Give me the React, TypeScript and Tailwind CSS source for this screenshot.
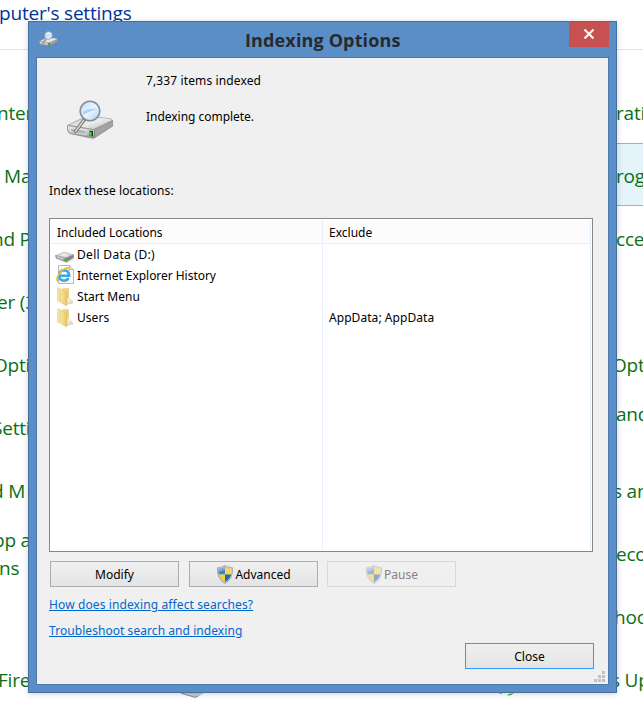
import type { ReactNode } from 'react';
import clsx from 'clsx';

function DriveSearchIcon({ className }: { className?: string }) {
  return (
    <svg viewBox="0 0 48 40" className={className}>
      <defs>
        <linearGradient id="driveTop" x1="0" y1="0" x2="1" y2="1">
          <stop offset="0" stopColor="#b9b9b9" />
          <stop offset="0.5" stopColor="#ededed" />
          <stop offset="1" stopColor="#b0b0b0" />
        </linearGradient>
        <linearGradient id="driveFront" x1="0" y1="0" x2="0" y2="1">
          <stop offset="0" stopColor="#f1f1f1" />
          <stop offset="1" stopColor="#9c9c9c" />
        </linearGradient>
        <linearGradient id="lens" x1="0" y1="0" x2="1" y2="1">
          <stop offset="0" stopColor="#b8dcfb" />
          <stop offset="0.5" stopColor="#eaf5ff" />
          <stop offset="1" stopColor="#a9d2fa" />
        </linearGradient>
      </defs>
      <path d="M4 34L27 39.5L48 26L44 23Z" fill="#000" opacity="0.12" />
      <path d="M2 25L20 16.5Q22 15.8 24 16L44 18.6Q46.500 19.200 46.500 21L28 30Z" fill="url(#driveTop)" stroke="#959595" strokeWidth="0.6" />
      <path d="M28 29.500L46.500 20.500V26L28 38Z" fill="#a3a3a3" stroke="#7c7c7c" strokeWidth="0.6" />
      <path d="M1.500 25.500L27.500 29.500Q28.500 30 28.500 31V37Q28.500 38.300 27 38L4 33.500Q1.500 32.500 1.500 29Z" fill="url(#driveFront)" stroke="#7b7b7b" strokeWidth="0.7" />
      <path d="M4 28L20 30.500V34.500L5 32Z" fill="#b3b3b3" stroke="#eee" strokeWidth="0.7" />
      <path d="M23.500 30.500L27 31V36.500L23.500 36Z" fill="#163d12" />
      <path d="M23.500 31.500L25.500 32V36L23.500 35.600Z" fill="#4be03b" />
      <path d="M18 20L9.500 31.500" stroke="#666" strokeWidth="3.400" strokeLinecap="round" />
      <path d="M17.500 20.500L9.500 31.500" stroke="#d4d4d4" strokeWidth="1.800" strokeLinecap="round" />
      <circle cx="24" cy="11" r="9.800" fill="url(#lens)" stroke="#8a8d90" strokeWidth="1.600" />
      <path d="M17 12Q23 8 31 9Q24 11 17.500 15Z" fill="#86bef3" opacity="0.6" />
    </svg>
  );
}

function DriveIcon() {
  return (
    <svg viewBox="0 0 20 14" className="mt-1 -ml-px h-3.5 w-5">
      <path d="M1 8L12 13.500L20 8.500L18 6Z" fill="#000" opacity="0.12" />
      <path d="M0.500 5.500L8 2.500Q9 2 10 2.200L18.500 4.800L11 8.200Z" fill="#cfcfcf" stroke="#b4b4b4" strokeWidth="0.500" />
      <path d="M4 5.200L9 3.200L14 4.800L10 6.700Z" fill="#ebebeb" />
      <path d="M0.500 5.500L11 8.200V12L1 8.200Z" fill="#a9a9a9" stroke="#8c8c8c" strokeWidth="0.500" />
      <path d="M11 8.200L18.500 4.800V7.500L11 12Z" fill="#868686" stroke="#7c7c7c" strokeWidth="0.500" />
      <path d="M2 6.800L8 8.800" stroke="#eee" strokeWidth="0.800" />
      <path d="M9 8.600L10.500 9V11.300L9 10.800Z" fill="#2fbd32" />
    </svg>
  );
}

function ExplorerIcon() {
  return (
    <svg viewBox="0 0 18 20" className="-mt-px h-5 w-[18px]">
      <path d="M2.500 0.500H13.500L17.500 4.500V18.500H2.500Z" fill="#fafafa" stroke="#a8a8a8" strokeWidth="0.800" />
      <path d="M13.500 0.500V4.500H17.500" fill="#e2e2e2" stroke="#a8a8a8" strokeWidth="0.700" />
      <path d="M12.600 13Q11 15.700 8 15.700Q3 15 3 10.500Q3.500 5.500 8 5.300Q13 5.500 13.200 10.800H4" fill="none" stroke="#38a7e6" strokeWidth="2.500" />
      <path d="M2 16.500C-1.500 14 5 4.500 10.500 3C13 2.300 14 3.500 12.800 5.500" fill="none" stroke="#f2bb2a" strokeWidth="1.700" />
    </svg>
  );
}

function FolderIcon() {
  return (
    <svg viewBox="0 0 18 20" className="h-5 w-[18px]">
      <defs>
        <linearGradient id="folderFront" x1="0" y1="0" x2="1" y2="0">
          <stop offset="0" stopColor="#f8e8a6" />
          <stop offset="1" stopColor="#e6c363" />
        </linearGradient>
      </defs>
      <path d="M7 18.500L17 16.500Q18 14 14 12Z" fill="#000" opacity="0.15" />
      <path d="M6 1.500L13 1V15.500L6 17Z" fill="#ebd287" />
      <path d="M11 11L14.500 10V14.500L11 16Z" fill="#f8edbf" />
      <path d="M1 1.200Q1 0.500 2 0.600L5 1V15.500L1 14.500Z" fill="#f3e0a0" />
      <path d="M4.500 2.500L10 4.500Q11 5 11 6V18Q11 18.800 10.300 18.500L4.500 15.500Z" fill="url(#folderFront)" stroke="#dcbb66" strokeWidth="0.400" />
    </svg>
  );
}

function ShieldIcon({ className }: { className?: string }) {
  return (
    <svg viewBox="0 0 16 19" className={clsx('-mr-px ml-px h-[19px] w-4', className)}>
      <path d="M8 0.400Q11.500 2.500 15.600 2.800Q16.500 13.500 8 18.700Q-0.500 13.500 0.400 2.800Q4.500 2.500 8 0.400Z" fill="#c2c8ca" stroke="#8d9497" strokeWidth="0.600" />
      <path d="M8 2V9.500H1.800Q1.400 7 1.600 4.100Q5 3.800 8 2Z" fill="#3f84c8" />
      <path d="M8 2Q11 3.800 14.400 4.100Q14.600 7 14.200 9.500H8Z" fill="#fbd94b" />
      <path d="M1.800 9.500H8V17.200Q3.200 14.200 1.800 9.500Z" fill="#f6ce3c" />
      <path d="M14.200 9.500H8V17.200Q12.800 14.200 14.200 9.500Z" fill="#2867b1" />
      <path d="M1.800 4.500Q5 4.200 8 2.500V4.500Q5 6 1.800 6.500Z" fill="#fff" opacity="0.35" />
    </svg>
  );
}

function DialogButton({ children, className }: { children: ReactNode; className?: string }) {
  return (
    <button
      className={clsx(
        'flex h-[26px] w-[129px] items-center justify-center gap-[3px] border bg-linear-to-b from-[#f0f0f0] to-[#e4e4e4]',
        className ?? 'border-[#acacac]',
      )}
    >
      {children}
    </button>
  );
}

const locations = [
  { name: 'Dell Data (D:)', icon: <DriveIcon />, exclude: '', tracking: 'tracking-[0.3px]' },
  { name: 'Internet Explorer History', icon: <ExplorerIcon />, exclude: '', tracking: 'tracking-[-0.04px]' },
  { name: 'Start Menu', icon: <FolderIcon />, exclude: '', tracking: 'tracking-[0.05px]' },
  { name: 'Users', icon: <FolderIcon />, exclude: 'AppData; AppData', tracking: 'tracking-[0.05px]' },
];

function ControlPanel() {
  return (
    <div className="flex h-full flex-col font-['Open_Sans','Noto_Sans',sans-serif] text-[19px] leading-7 tracking-[-0.2px] whitespace-nowrap text-[#0b7016]">
      <div className="h-[50px] border-b border-[#d6e5f5] text-[#003399]">
        <h1 className="-mt-px -ml-px">puter's settings</h1>
      </div>
      <div className="flex h-[643px] justify-between">
        <div className="w-7 overflow-hidden pt-[49px]">
          <p className="-ml-[3px]">nter</p>
          <p className="mt-[35px] ml-1">Ma</p>
          <p className="mt-[35px] -ml-[8px]">nd P</p>
          <p className="mt-[35px] -ml-[3px]">er (3</p>
          <p className="mt-[35px] -ml-[7px]">Opti</p>
          <p className="mt-[35px] -ml-[8px]">Setti</p>
          <p className="mt-[35px] -ml-[8px]">d M</p>
          <p className="mt-[21px] -ml-[7px]">pp a</p>
          <p className="-ml-px">ns</p>
          <p className="mt-[84px] -ml-0.5">Fire</p>
        </div>
        <div className="w-[27px] overflow-hidden pt-[49px]">
          <p>rati</p>
          <div className="mt-4 h-[63px] border-y border-[#70c0e7] bg-[#e5f3fb] pt-[18px]">rog</div>
          <p className="mt-[19px]">cce</p>
          <p className="mt-[98px] -ml-1">Opt</p>
          <p className="mt-[21px]">and</p>
          <p className="mt-[49px] -ml-[3px]">s an</p>
          <p className="mt-[35px]">eco</p>
          <p className="mt-[35px] -ml-0.5">hoo</p>
          <p className="mt-[35px] -ml-[5px]">s Up</p>
        </div>
      </div>
      <div className="flex gap-[294px] pl-[180px]">
        <svg viewBox="0 0 24 6" className="h-1.5 w-6">
          <path d="M0 0H24L17 4.500Q15.500 5 14 4.500Z" fill="#c3ced6" />
          <path d="M1 0.300L15 4.300L18 3" fill="none" stroke="#777c80" strokeWidth="0.800" />
        </svg>
        <svg viewBox="0 0 18 4" className="h-1 w-[18px]">
          <path d="M1 0H4L3 1Z M11 1L16 0L13 2L9 2.500Z" fill="#2da52f" />
        </svg>
      </div>
    </div>
  );
}

function IndexingDialog() {
  return (
    <div className="absolute top-[21px] left-7 flex h-[672px] w-[589px] flex-col border border-[#44709f] bg-[#5b8ec6] px-[7px] pb-[7px] font-['Noto_Sans',sans-serif] text-[12px] leading-4 whitespace-nowrap text-black shadow-[0_1px_6px_rgba(0,0,0,0.18)]">
      <header className="flex h-[35px] shrink-0 items-start">
        <DriveSearchIcon className="mt-[9px] ml-[3px] h-4 w-[19px]" />
        <h2 className="ml-[187px] w-[160px] pt-1 font-['Open_Sans',sans-serif] text-[18px] leading-7 font-bold tracking-[0.14px] text-[#262a2e]">
          Indexing Options
        </h2>
        <button className="ml-auto flex h-[25px] w-10 items-center justify-center bg-[#c75050]">
          <svg viewBox="0 0 12 10" className="-mt-0.5 h-2.5 w-3">
            <path d="M1.500 0.500L10.500 9.500M10.500 0.500L1.500 9.500" stroke="#fff" strokeWidth="2" />
          </svg>
        </button>
      </header>
      <div className="flex grow flex-col border border-[#4b79ad] bg-[#f0f0f0]">
        <div className="flex h-[125px]">
          <DriveSearchIcon className="mt-[42px] ml-[29px] h-10 w-12" />
          <div className="ml-8 pt-[15px]">
            <p className="tracking-[0.12px]">7,337 items indexed</p>
            <p className="mt-5 tracking-[-0.03px]">Indexing complete.</p>
          </div>
        </div>
        <p className="ml-3 tracking-[0.08px]">Index these locations:</p>
        <div className="mt-[19px] ml-3 flex h-[334px] w-[544px] border border-[#828790] bg-white p-px">
          <div className="w-[272px] border-r border-[#e5f0fb]">
            <div className="h-6 border-b border-[#e5f0fb] bg-[#fcfcfc] pt-[5px] pl-1.5 tracking-[-0.04px]">Included Locations</div>
            {locations.map((item) => (
              <div key={item.name} className="flex h-[21px] items-center pl-1">
                <span className="flex w-[22px] justify-start pl-px">{item.icon}</span>
                <span className={item.tracking}>{item.name}</span>
              </div>
            ))}
          </div>
          <div className="w-[268px] border-r border-[#e5f0fb]">
            <div className="h-6 border-b border-[#e5f0fb] bg-[#fcfcfc] pt-[5px] pl-1.5">Exclude</div>
            {locations.map((item) => (
              <div key={item.name} className="flex h-[21px] items-center pl-1.5 tracking-[0.06px]">{item.exclude}</div>
            ))}
          </div>
        </div>
        <div className="mt-[9px] ml-[13px] flex">
          <DialogButton>
            <span className="pt-0.5">Modify</span>
          </DialogButton>
          <DialogButton className="ml-2.5 border-[#acacac]">
            <ShieldIcon />
            <span className="pt-0.5">Advanced</span>
          </DialogButton>
          <DialogButton className="ml-[9px] border-[#d9d9d9] from-[#efefef] to-[#efefef] text-[#838383]">
            <ShieldIcon className="opacity-50" />
            <span className="pt-0.5">Pause</span>
          </DialogButton>
        </div>
        <a href="#" className="mt-2.5 ml-3 self-start tracking-[0.11px] text-[#0066cc] underline">How does indexing affect searches?</a>
        <a href="#" className="mt-2.5 ml-3 self-start tracking-[0.06px] text-[#0066cc] underline">Troubleshoot search and indexing</a>
        <div className="mt-1 flex justify-end">
          <DialogButton className="border-[#3399ff]">
            <span className="pt-0.5">Close</span>
          </DialogButton>
          <svg viewBox="0 0 11 11" className="mt-7 mr-[3px] h-[11px] w-[11px]">
            <path d="M8 0h3v3h-3z M4 4h3v3h-3z M8 4h3v3h-3z M0 8h3v3h-3z M4 8h3v3h-3z M8 8h3v3h-3z" fill="#bfbfbf" />
          </svg>
        </div>
      </div>
    </div>
  );
}

export default function App() {
  return (
    <div className="relative h-[716px] w-[643px] overflow-hidden bg-white">
      <ControlPanel />
      <IndexingDialog />
    </div>
  );
}
